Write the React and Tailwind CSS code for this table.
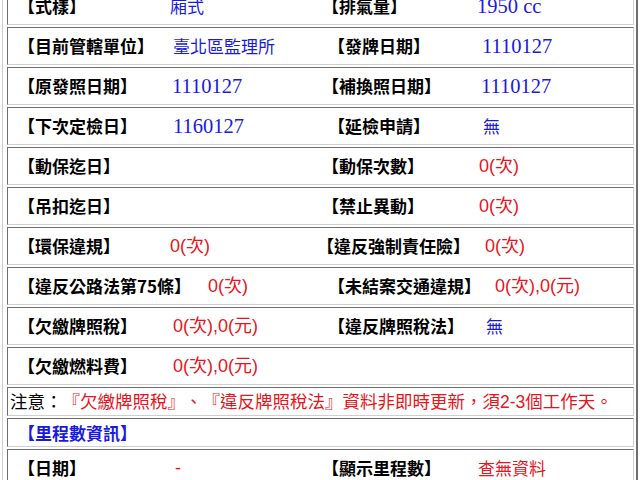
import React from "react";

const cell = "flex items-center border border-t-[#6e6e6e] border-l-[#6e6e6e] border-r-[#cfcfcf] border-b-[#cfcfcf] bg-white";
const lbl = "shrink-0 font-bold text-[17px] text-black";
const blueCjk = "shrink-0 text-[17px] text-[#1a1adf]";
const blueNum = "shrink-0 text-[20.5px] text-[#1a1adf] font-['Liberation_Serif','Noto_Sans_CJK_TC',serif]";
const red = "shrink-0 text-[18px] text-[#e8141c] font-['Liberation_Sans','Noto_Sans_CJK_TC',sans-serif]";

const App = () => {
    return (
        <div className="w-[640px] h-[480px] overflow-hidden bg-white font-['Noto_Sans_CJK_TC',sans-serif] [text-spacing-trim:space-all]">
            <div className="ml-[2px] w-[636px] border-l border-r-2 border-l-[#cfcfcf] border-r-[#6e6e6e] pl-[4px] pr-[2px] flex flex-col gap-[2px]">
                <div className={`${cell} -mt-[13px] h-[38px] pl-[10px]`}>
                    <span className={`${lbl} w-[152px]`}>【式樣】</span>
                    <span className={`${blueCjk} w-[152px]`}>廂式</span>
                    <span className={`${lbl} w-[155px]`}>【排氣量】</span>
                    <span className={blueNum}>1950 cc</span>
                </div>
                <div className={`${cell} h-[38px] pl-[10px]`}>
                    <span className={`${lbl} w-[155px]`}>【目前管轄單位】</span>
                    <span className={`${blueCjk} w-[155px]`}>臺北區監理所</span>
                    <span className={`${lbl} w-[154px]`}>【發牌日期】</span>
                    <span className={blueNum}>1110127</span>
                </div>
                <div className={`${cell} h-[38px] pl-[10px]`}>
                    <span className={`${lbl} w-[154px]`}>【原發照日期】</span>
                    <span className={`${blueNum} w-[150px]`}>1110127</span>
                    <span className={`${lbl} w-[159px]`}>【補換照日期】</span>
                    <span className={blueNum}>1110127</span>
                </div>
                <div className={`${cell} h-[38px] pl-[10px]`}>
                    <span className={`${lbl} w-[155px]`}>【下次定檢日】</span>
                    <span className={`${blueNum} w-[155px]`}>1160127</span>
                    <span className={`${lbl} w-[155px]`}>【延檢申請】</span>
                    <span className={blueCjk}>無</span>
                </div>
                <div className={`${cell} h-[38px] pl-[10px]`}>
                    <span className={`${lbl} w-[152px]`}>【動保迄日】</span>
                    <span className="shrink-0 w-[152px]"></span>
                    <span className={`${lbl} w-[157px]`}>【動保次數】</span>
                    <span className={red}>0(次)</span>
                </div>
                <div className={`${cell} h-[38px] pl-[10px]`}>
                    <span className={`${lbl} w-[152px]`}>【吊扣迄日】</span>
                    <span className="shrink-0 w-[152px]"></span>
                    <span className={`${lbl} w-[157px]`}>【禁止異動】</span>
                    <span className={red}>0(次)</span>
                </div>
                <div className={`${cell} h-[38px] pl-[10px]`}>
                    <span className={`${lbl} w-[152px]`}>【環保違規】</span>
                    <span className={`${red} w-[147px]`}>0(次)</span>
                    <span className={`${lbl} w-[168px]`}>【違反強制責任險】</span>
                    <span className={red}>0(次)</span>
                </div>
                <div className={`${cell} h-[38px] pl-[10px]`}>
                    <span className={`${lbl} w-[190px]`}>【違反公路法第75條】</span>
                    <span className={`${red} w-[120px]`}>0(次)</span>
                    <span className={`${lbl} w-[167px]`}>【未結案交通違規】</span>
                    <span className={red}>0(次),0(元)</span>
                </div>
                <div className={`${cell} h-[38px] pl-[10px]`}>
                    <span className={`${lbl} w-[155px]`}>【欠繳牌照稅】</span>
                    <span className={`${red} w-[155px]`}>0(次),0(元)</span>
                    <span className={`${lbl} w-[158px]`}>【違反牌照稅法】</span>
                    <span className={blueCjk}>無</span>
                </div>
                <div className={`${cell} h-[38px] pl-[10px]`}>
                    <span className={`${lbl} w-[155px]`}>【欠繳燃料費】</span>
                    <span className={red}>0(次),0(元)</span>
                </div>
                <div className={`${cell} h-[29px] pl-[2px] text-[17.5px] whitespace-nowrap`}>
                    <span className="text-black">注意：</span>
                    <span className="text-[#e8141c]">『欠繳牌照稅』、『違反牌照稅法』資料非即時更新，須<span className="font-['Liberation_Sans',sans-serif]">2-3</span>個工作天。</span>
                </div>
                <div className={`${cell} h-[29px] pl-[10px]`}>
                    <span className="font-bold text-[17px] text-[#1a1adf]">【里程數資訊】</span>
                </div>
                <div className={`${cell} h-[38px] pl-[10px]`}>
                    <span className={`${lbl} w-[157px]`}>【日期】</span>
                    <span className={`${red} w-[147px]`}>-</span>
                    <span className={`${lbl} w-[156px]`}>【顯示里程數】</span>
                    <span className="shrink-0 text-[17px] text-[#e8141c]">查無資料</span>
                </div>
            </div>
        </div>
    );
};

export default App;
